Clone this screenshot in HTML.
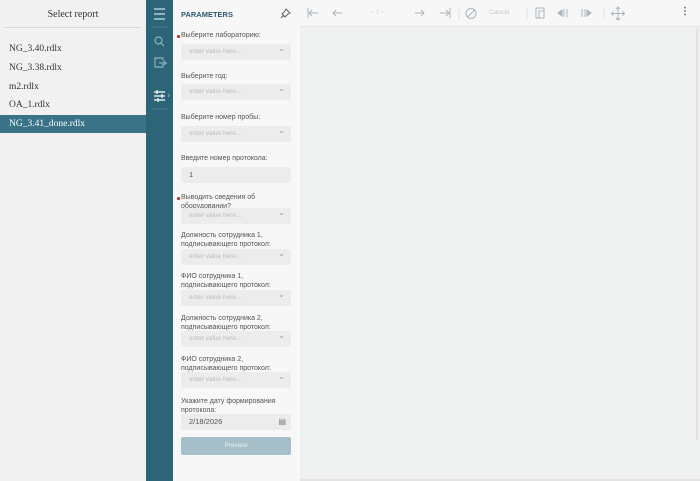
<!DOCTYPE html>
<html><head><meta charset="utf-8"><style>
*{margin:0;padding:0;box-sizing:border-box}
body{width:700px;height:481px;overflow:hidden;background:#eff0f0;font-family:"Liberation Sans",sans-serif;position:relative}
.a{position:absolute}
#left{left:0;top:0;width:146px;height:481px;background:#f1f1f1}
#left .t{position:absolute;top:9px;width:146px;text-align:center;font-family:"Liberation Serif",serif;font-size:10px;color:#333}
#left .hr{position:absolute;left:5px;top:27px;width:136px;height:1px;background:#d8d8d8}
.it{position:absolute;left:0;width:146px;height:18px;line-height:18px;padding-left:9px;font-family:"Liberation Serif",serif;font-size:9.5px;color:#333}
.it.s{background:#3a7388;color:#fff}
#side{left:146px;top:0;width:27px;height:481px;background:#2c6478}
#par{left:173px;top:0;width:127px;height:481px;background:#f7f7f7}
.ph{position:absolute;left:8px;top:10px;font-size:7.5px;font-weight:bold;color:#2c5a6e}
.lb{position:absolute;left:8px;width:115px;font-size:7px;line-height:8.5px;color:#555}
.req:before{content:"";position:absolute;left:-4px;top:3px;width:2.5px;height:2.5px;border-radius:50%;background:#b33}
.f{position:absolute;left:8px;width:110px;height:16px;background:#ececec;border-radius:2px;font-size:6.5px;color:#bbb;line-height:16px;padding-left:8px}
.f:after{content:"⌄";position:absolute;right:6px;top:-3px;font-size:8px;color:#999}
.f.n:after{content:""}
.f.v{color:#555;font-size:7.5px}
#tb{left:300px;top:0;width:400px;height:27px;background:#f7f7f7;border-bottom:1px solid #e6e6e6}
</style></head><body>
<div id="left" class="a">
<div class="t">Select report</div><div class="hr"></div>
<div class="it" style="top:40px">NG_3.40.rdlx</div>
<div class="it" style="top:59px">NG_3.38.rdlx</div>
<div class="it" style="top:78px">m2.rdlx</div>
<div class="it" style="top:96px">OA_1.rdlx</div>
<div class="it s" style="top:115px">NG_3.41_done.rdlx</div>
</div>
<div id="side" class="a">
<svg width="27" height="110" style="position:absolute;left:0;top:0" stroke="#cfe0e6" fill="none" stroke-width="1.2">
<path d="M8 9h11M8 14h11M8 19h11"/>
<line x1="5" y1="27" x2="22" y2="27" stroke="#3f7689"/>
<circle cx="12.5" cy="40.5" r="3.5" stroke="#8fb0bc"/><path d="M15 43l3 3" stroke="#8fb0bc"/>
<path d="M17 64v3h-8v-9h8v3M13 63h7l-2-2M20 63l-2 2" stroke="#8fb0bc"/>
<path d="M8 92h11M8 96h11M8 100h11M11 90v4M16 94v4M12 98v4" stroke="#fff"/>
<path d="M22 94l1.5 1.5-1.5 1.5" stroke="#8fb0bc" stroke-width=".8"/>
<line x1="5" y1="109" x2="22" y2="109" stroke="#3f7689"/>
</svg>
</div>
<div id="par" class="a">
<div class="ph">PARAMETERS</div>
<svg class="a" style="left:107px;top:7px" width="12" height="12" fill="none" stroke="#556" stroke-width=".9"><path d="M6 2l4 4-2 1-2 2-1 1-3-3 1-1 2-2zM4 8l-3 3"/></svg>
<div class="lb req" style="top:32px">Выберите лабораторию:</div>
<div class="f" style="top:44px">enter value here...</div>
<div class="lb" style="top:73px">Выберите год:</div>
<div class="f" style="top:84px">enter value here...</div>
<div class="lb" style="top:114px">Выберите номер пробы:</div>
<div class="f" style="top:126px">enter value here...</div>
<div class="lb" style="top:155px">Введите номер протокола:</div>
<div class="f n v" style="top:167px">1</div>
<div class="lb req" style="top:194px">Выводить сведения об оборудовании?</div>
<div class="f" style="top:208px">enter value here...</div>
<div class="lb" style="top:232px">Должность сотрудника 1, подписывающего протокол:</div>
<div class="f" style="top:249px">enter value here...</div>
<div class="lb" style="top:273px">ФИО сотрудника 1, подписывающего протокол:</div>
<div class="f" style="top:290px">enter value here...</div>
<div class="lb" style="top:315px">Должность сотрудника 2, подписывающего протокол:</div>
<div class="f" style="top:331px">enter value here...</div>
<div class="lb" style="top:356px">ФИО сотрудника 2, подписывающего протокол:</div>
<div class="f" style="top:372px">enter value here...</div>
<div class="lb" style="top:398px">Укажите дату формирования протокола:</div>
<div class="f n v" style="top:414px">2/18/2026<span style="position:absolute;right:5px;top:0;color:#777;font-size:8px">▤</span></div>
<div class="a" style="left:8px;top:437px;width:110px;height:18px;background:#a6bfc9;border-radius:2px;color:#e8f0f3;font-size:6.5px;text-align:center;line-height:18px">Preview</div>
</div>
<div id="tb" class="a">
<svg width="400" height="27" style="position:absolute;left:0;top:0" stroke="#aab6bc" fill="none" stroke-width="1">
<path d="M8 8v10M18 13h-9M12 10l-3 3 3 3"/>
<path d="M42 13h-9M36 10l-3 3 3 3"/>
<path d="M115 13h9M121 10l3 3-3 3"/>
<path d="M140 13h9M146 10l3 3-3 3M150 8v10"/>
<line x1="159" y1="8" x2="159" y2="19" stroke="#e3e3e3"/>
<circle cx="171" cy="13.5" r="5"/><path d="M167.5 17l7-7"/>
<line x1="227" y1="8" x2="227" y2="19" stroke="#e3e3e3"/>
<path d="M236 8h8v8M236 8v10h8"/><path d="M239 11h5v7h-5z"/>
<path d="M262 10l-4 3 4 3zM264 9v8M267 9v8" fill="#aab6bc"/>
<path d="M282 9v8M285 9v8M287 10l4 3-4 3z" fill="#aab6bc"/>
<line x1="304" y1="8" x2="304" y2="19" stroke="#e3e3e3"/>
<path d="M318 7v13M311.5 13.5h13M316 9l2-2 2 2M316 18l2 2 2-2M313.5 11.5l-2 2 2 2M322.5 11.5l2 2-2 2"/>
</svg>
<div class="a" style="left:70px;top:9px;font-size:7px;color:#c5ccd0">-- / --</div>
<div class="a" style="left:189px;top:9px;font-size:6.5px;color:#c0c8cc">Cancel</div>
<div class="a" style="left:380px;top:6px;font-size:10px;color:#557;font-weight:bold">⋮</div>
</div>
<div class="a" style="left:696px;top:28px;width:2px;height:412px;background:#e2e2e2"></div>
<div class="a" style="left:300px;top:479px;width:400px;height:2px;background:#e4e4e4"></div>
</body></html>
